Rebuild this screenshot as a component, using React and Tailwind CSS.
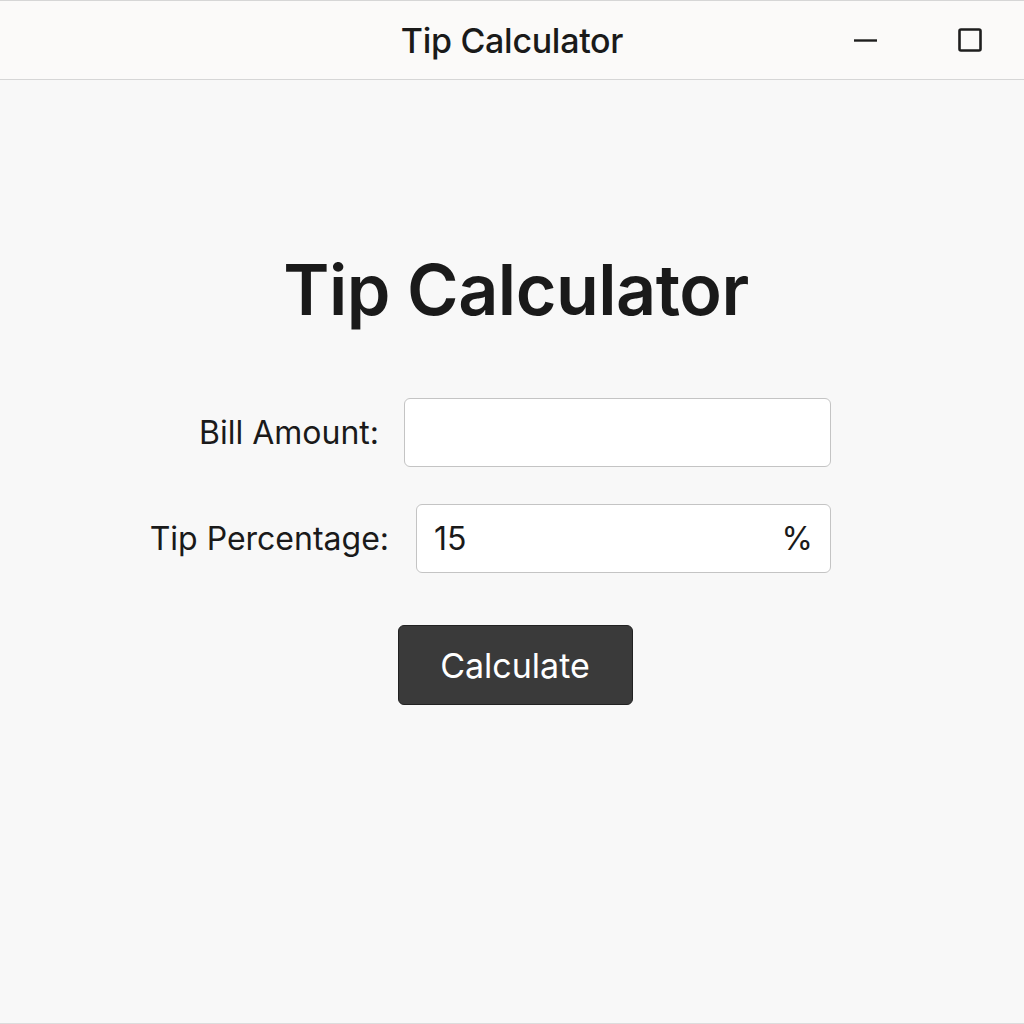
export default function App() {
  return (
    <div
      className="w-[1024px] h-[1024px] flex flex-col bg-[#f8f8f8] text-[#1a1a1a] border-b border-[#dcdcdc]"
      style={{ fontFamily: "Inter, 'Noto Sans', sans-serif" }}
    >
      {/* Title bar */}
      <div className="h-[80px] flex items-center border-t border-b border-[#d6d6d6] bg-[#fbfaf9] relative">
        <div className="flex-1 text-center text-[34px] font-medium tracking-[-0.3px]">
          Tip Calculator
        </div>
        <div className="absolute right-[42px] top-0 h-full flex items-center gap-[80px]">
          <svg width="24" height="24" viewBox="0 0 24 24">
            <line x1="0" y1="12.5" x2="23" y2="12.5" stroke="#1e1e1e" strokeWidth="2.4" />
          </svg>
          <svg width="24" height="24" viewBox="0 0 24 24">
            <rect x="1.5" y="1.5" width="21" height="21" rx="1.5" fill="none" stroke="#1e1e1e" strokeWidth="2.6" />
          </svg>
        </div>
      </div>

      {/* Content */}
      <div className="flex-1 flex flex-col pt-[175px]">
        <h1 className="text-center text-[70px] font-semibold tracking-[-0.5px] leading-none pl-[8px]">
          Tip Calculator
        </h1>

        <div className="ml-[100px] w-[731px] mt-[73px] flex flex-col gap-[37px]">
          <div className="flex items-center justify-end gap-[25px]">
            <label className="text-[32px] whitespace-nowrap shrink-0">Bill Amount:</label>
            <input
              type="text"
              className="shrink-0 w-[427px] h-[69px] bg-white border border-[#c4c4c4] rounded-[6px] px-[17px] text-[32px] outline-none"
            />
          </div>
          <div className="flex items-center justify-end gap-[27px]">
            <label className="text-[32px] whitespace-nowrap shrink-0">Tip Percentage:</label>
            <div className="shrink-0 w-[415px] h-[69px] bg-white border border-[#c4c4c4] rounded-[6px] px-[17px] flex items-center justify-between text-[32px]">
              <input
                type="text"
                defaultValue="15"
                className="w-[300px] bg-transparent outline-none"
              />
              <span>%</span>
            </div>
          </div>
        </div>

        <div className="flex justify-center mt-[52px] pl-[6px]">
          <button className="w-[235px] h-[80px] bg-[#3a3a3a] border border-[#222] rounded-[6px] text-white text-[34px]">
            Calculate
          </button>
        </div>
      </div>
    </div>
  );
}
